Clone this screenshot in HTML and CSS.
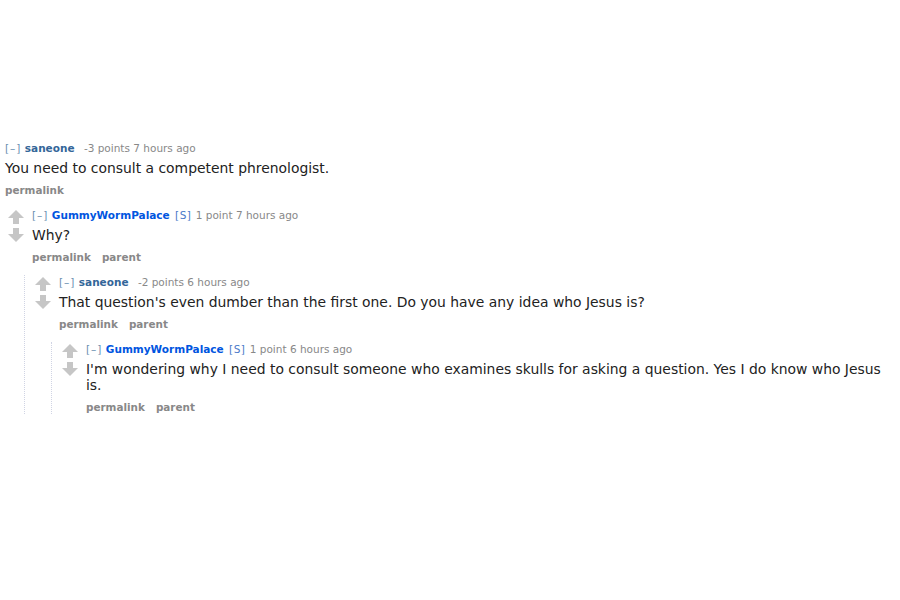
FILE: index.html
```html
<!DOCTYPE html>
<html>
<head>
<meta charset="utf-8">
<link rel="stylesheet" href="styles.css">
</head>
<body>
<div class="page">
  <div class="comment top">
    <div class="entry">
      <p class="tagline"><span class="expand">[–]</span> <span class="author">saneone</span> <span class="score">-3 points</span> <span class="time">7 hours ago</span></p>
      <p class="md">You need to consult a competent phrenologist.</p>
      <ul class="buttons"><li>permalink</li></ul>
    </div>
  </div>

  <div class="comment">
    <div class="row">
      <div class="midcol">
        <svg class="arrow" width="16" height="14" viewBox="0 0 16 14"><path d="M8 0 L16 8 L11 8 L11 14 L5 14 L5 8 L0 8 Z"/></svg>
        <svg class="arrow" width="16" height="14" viewBox="0 0 16 14"><path d="M8 14 L16 6 L11 6 L11 0 L5 0 L5 6 L0 6 Z"/></svg>
      </div>
      <div class="entry">
        <p class="tagline"><span class="expand">[–]</span> <span class="author submitter">GummyWormPalace</span> <span class="flag">[S]</span> <span class="score">1 point</span> <span class="time">7 hours ago</span></p>
        <p class="md">Why?</p>
        <ul class="buttons"><li>permalink</li><li>parent</li></ul>
      </div>
    </div>
    <div class="child">
      <div class="comment">
        <div class="row">
          <div class="midcol">
            <svg class="arrow" width="16" height="14" viewBox="0 0 16 14"><path d="M8 0 L16 8 L11 8 L11 14 L5 14 L5 8 L0 8 Z"/></svg>
            <svg class="arrow" width="16" height="14" viewBox="0 0 16 14"><path d="M8 14 L16 6 L11 6 L11 0 L5 0 L5 6 L0 6 Z"/></svg>
          </div>
          <div class="entry">
            <p class="tagline"><span class="expand">[–]</span> <span class="author">saneone</span> <span class="score">-2 points</span> <span class="time">6 hours ago</span></p>
            <p class="md">That question's even dumber than the first one. Do you have any idea who Jesus is?</p>
            <ul class="buttons"><li>permalink</li><li>parent</li></ul>
          </div>
        </div>
        <div class="child">
          <div class="comment">
            <div class="row">
              <div class="midcol">
                <svg class="arrow" width="16" height="14" viewBox="0 0 16 14"><path d="M8 0 L16 8 L11 8 L11 14 L5 14 L5 8 L0 8 Z"/></svg>
                <svg class="arrow" width="16" height="14" viewBox="0 0 16 14"><path d="M8 14 L16 6 L11 6 L11 0 L5 0 L5 6 L0 6 Z"/></svg>
              </div>
              <div class="entry">
                <p class="tagline"><span class="expand">[–]</span> <span class="author submitter">GummyWormPalace</span> <span class="flag">[S]</span> <span class="score">1 point</span> <span class="time">6 hours ago</span></p>
                <p class="md">I'm wondering why I need to consult someone who examines skulls for asking a question. Yes I do know who Jesus is.</p>
                <ul class="buttons"><li>permalink</li><li>parent</li></ul>
              </div>
            </div>
          </div>
        </div>
      </div>
    </div>
  </div>
</div>
</body>
</html>
```

FILE: styles.css
```css
html, body {
  margin: 0;
  padding: 0;
  background: #ffffff;
}
body {
  font-family: "DejaVu Sans", Verdana, sans-serif;
  color: #222222;
}
.page {
  padding: 141px 0 0 5px;
  width: 895px;
}
p, ul {
  margin: 0;
  padding: 0;
}
.comment {
  display: flex;
  flex-direction: column;
}
.comment + .comment {
  margin-top: 11px;
}
.row {
  display: flex;
  align-items: flex-start;
}
.midcol {
  width: 16px;
  margin-left: 3px;
  margin-right: 8px;
  display: flex;
  flex-direction: column;
  gap: 4px;
  padding-top: 2px;
  flex-shrink: 0;
}
.arrow {
  display: block;
  fill: #c6c6c6;
}
.entry {
  flex: 1;
  min-width: 0;
}
.tagline {
  font-size: 10.5px;
  line-height: 14px;
  color: #888888;
  white-space: nowrap;
}
.expand {
  color: #6a8fb0;
  letter-spacing: 1px;
}
.author {
  font-weight: bold;
  color: #336699;
  margin-right: 6px;
}
.author.submitter {
  color: #0055df;
  margin-right: 2px;
}
.flag {
  color: #4a79c9;
  letter-spacing: 0.5px;
  margin-right: 1px;
}
.md {
  font-size: 13.9px;
  line-height: 16px;
  margin-top: 5px;
  color: #222222;
}
.buttons {
  list-style: none;
  display: flex;
  gap: 11px;
  margin-top: 7px;
  font-size: 10.4px;
  line-height: 14px;
  font-weight: bold;
  color: #888888;
}
.child {
  margin-top: 11px;
  margin-left: 19px;
  border-left: 1px dotted #d0d4e4;
  padding-left: 7px;
}
```
